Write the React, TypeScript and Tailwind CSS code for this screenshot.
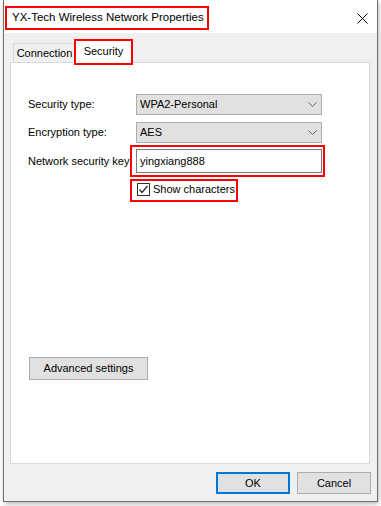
import type { ReactNode } from "react";

const font = { fontFamily: '"Liberation Sans", Arial, sans-serif' };

// red annotation frame laid over a control
function Mark({ className }: { className: string }) {
  return <span className={`pointer-events-none absolute border-2 border-[#ff0000] ${className}`} />;
}

function Chevron() {
  return (
    <svg width="9" height="5" viewBox="0 0 9 5" className="shrink-0">
      <path d="M0.5 0.5 L4.5 4.5 L8.5 0.5" fill="none" stroke="#5f5f5f" strokeWidth="1" />
    </svg>
  );
}

function Select({ value }: { value: string }) {
  return (
    <div className="flex h-[21px] w-[186px] items-center justify-between border border-[#adadad] bg-[#e1e1e1] pl-[3px] pr-[4px]">
      <span>{value}</span>
      <Chevron />
    </div>
  );
}

function Row({ label, children }: { label: string; children: ReactNode }) {
  return (
    <div className="flex items-center">
      <div className="w-[108px] shrink-0">{label}</div>
      {children}
    </div>
  );
}

function Button({ label, width, primary }: { label: string; width: string; primary?: boolean }) {
  return (
    <div
      className={`flex h-[22px] items-center justify-center bg-[#e1e1e1] ${width} ${
        primary ? "border-2 border-[#0078d7]" : "border border-[#adadad]"
      }`}
    >
      {label}
    </div>
  );
}

export default function App() {
  return (
    <div className="h-[506px] w-[381px] overflow-hidden bg-white text-[11px] text-black" style={font}>
      <div className="ml-[3px] flex h-[502px] w-[375px] flex-col border-x border-b border-[#707070] bg-[#f0f0f0] shadow-[1px_2px_5px_rgba(0,0,0,0.28)]">
        {/* title bar */}
        <div className="relative flex h-[33px] shrink-0 items-center justify-between bg-white pl-[8px] pr-[9px]">
          <span className="pt-[2px] text-[11.5px]">YX-Tech Wireless Network Properties</span>
          <Mark className="left-[1px] top-[6px] h-[24px] w-[204px]" />
          <svg width="11" height="11" viewBox="0 0 11 11" className="mt-[3px]">
            <path d="M0.5 0.5 L10.5 10.5 M10.5 0.5 L0.5 10.5" stroke="#000" strokeWidth="1" />
          </svg>
        </div>

        {/* tabs */}
        <div className="flex h-[29px] shrink-0 items-end pl-[9px]">
          <div className="flex h-[19px] w-[62px] items-center justify-center border-l border-t border-[#d9d9d9] bg-[#f0f0f0] pt-[1px]">
            Connection
          </div>
          <div className="relative z-10 -mb-px flex h-[23px] w-[57px] items-center justify-center border-x border-t border-[#d9d9d9] bg-white pb-[2px]">
            Security
            <Mark className="-inset-[2px]" />
          </div>
        </div>

        {/* page */}
        <div className="ml-[6px] flex h-[402px] w-[360px] shrink-0 flex-col border border-[#d9d9d9] bg-white pl-[17px] pt-[31px]">
          <div className="flex flex-col gap-[7px]">
            <Row label="Security type:">
              <Select value="WPA2-Personal" />
            </Row>
            <Row label="Encryption type:">
              <Select value="AES" />
            </Row>
          </div>
          <div className="mt-[6px]">
            <Row label="Network security key">
              <div className="relative">
                <div className="flex h-[24px] w-[186px] items-center border border-[#7a7a7a] bg-white pl-[3px]">
                  yingxiang888
                </div>
                <Mark className="-bottom-[4px] -left-[6px] -right-[3px] -top-[4px]" />
              </div>
            </Row>
          </div>
          <div className="ml-[109px] mt-[10px] flex">
            <div className="relative flex h-[13px] items-center gap-[3px]">
              <span className="flex h-[13px] w-[13px] items-center justify-center border border-[#333333] bg-white">
                <svg width="11" height="11" viewBox="0 0 11 11">
                  <path d="M1.5 5.5 L4 8.5 L9.5 2" fill="none" stroke="#222" strokeWidth="1.2" />
                </svg>
              </span>
              <span>Show characters</span>
              <Mark className="-bottom-[6px] -left-[7px] -right-[3px] -top-[4px]" />
            </div>
          </div>
          <div className="ml-[1px] mt-[161px] flex">
            <div className="flex h-[23px] w-[119px] items-center justify-center border border-[#adadad] bg-[#e1e1e1]">
              Advanced settings
            </div>
          </div>
        </div>

        {/* dialog buttons */}
        <div className="flex justify-end gap-[7px] pr-[6px] pt-[8px]">
          <Button label="OK" width="w-[74px]" primary />
          <Button label="Cancel" width="w-[74px]" />
        </div>
      </div>
    </div>
  );
}
